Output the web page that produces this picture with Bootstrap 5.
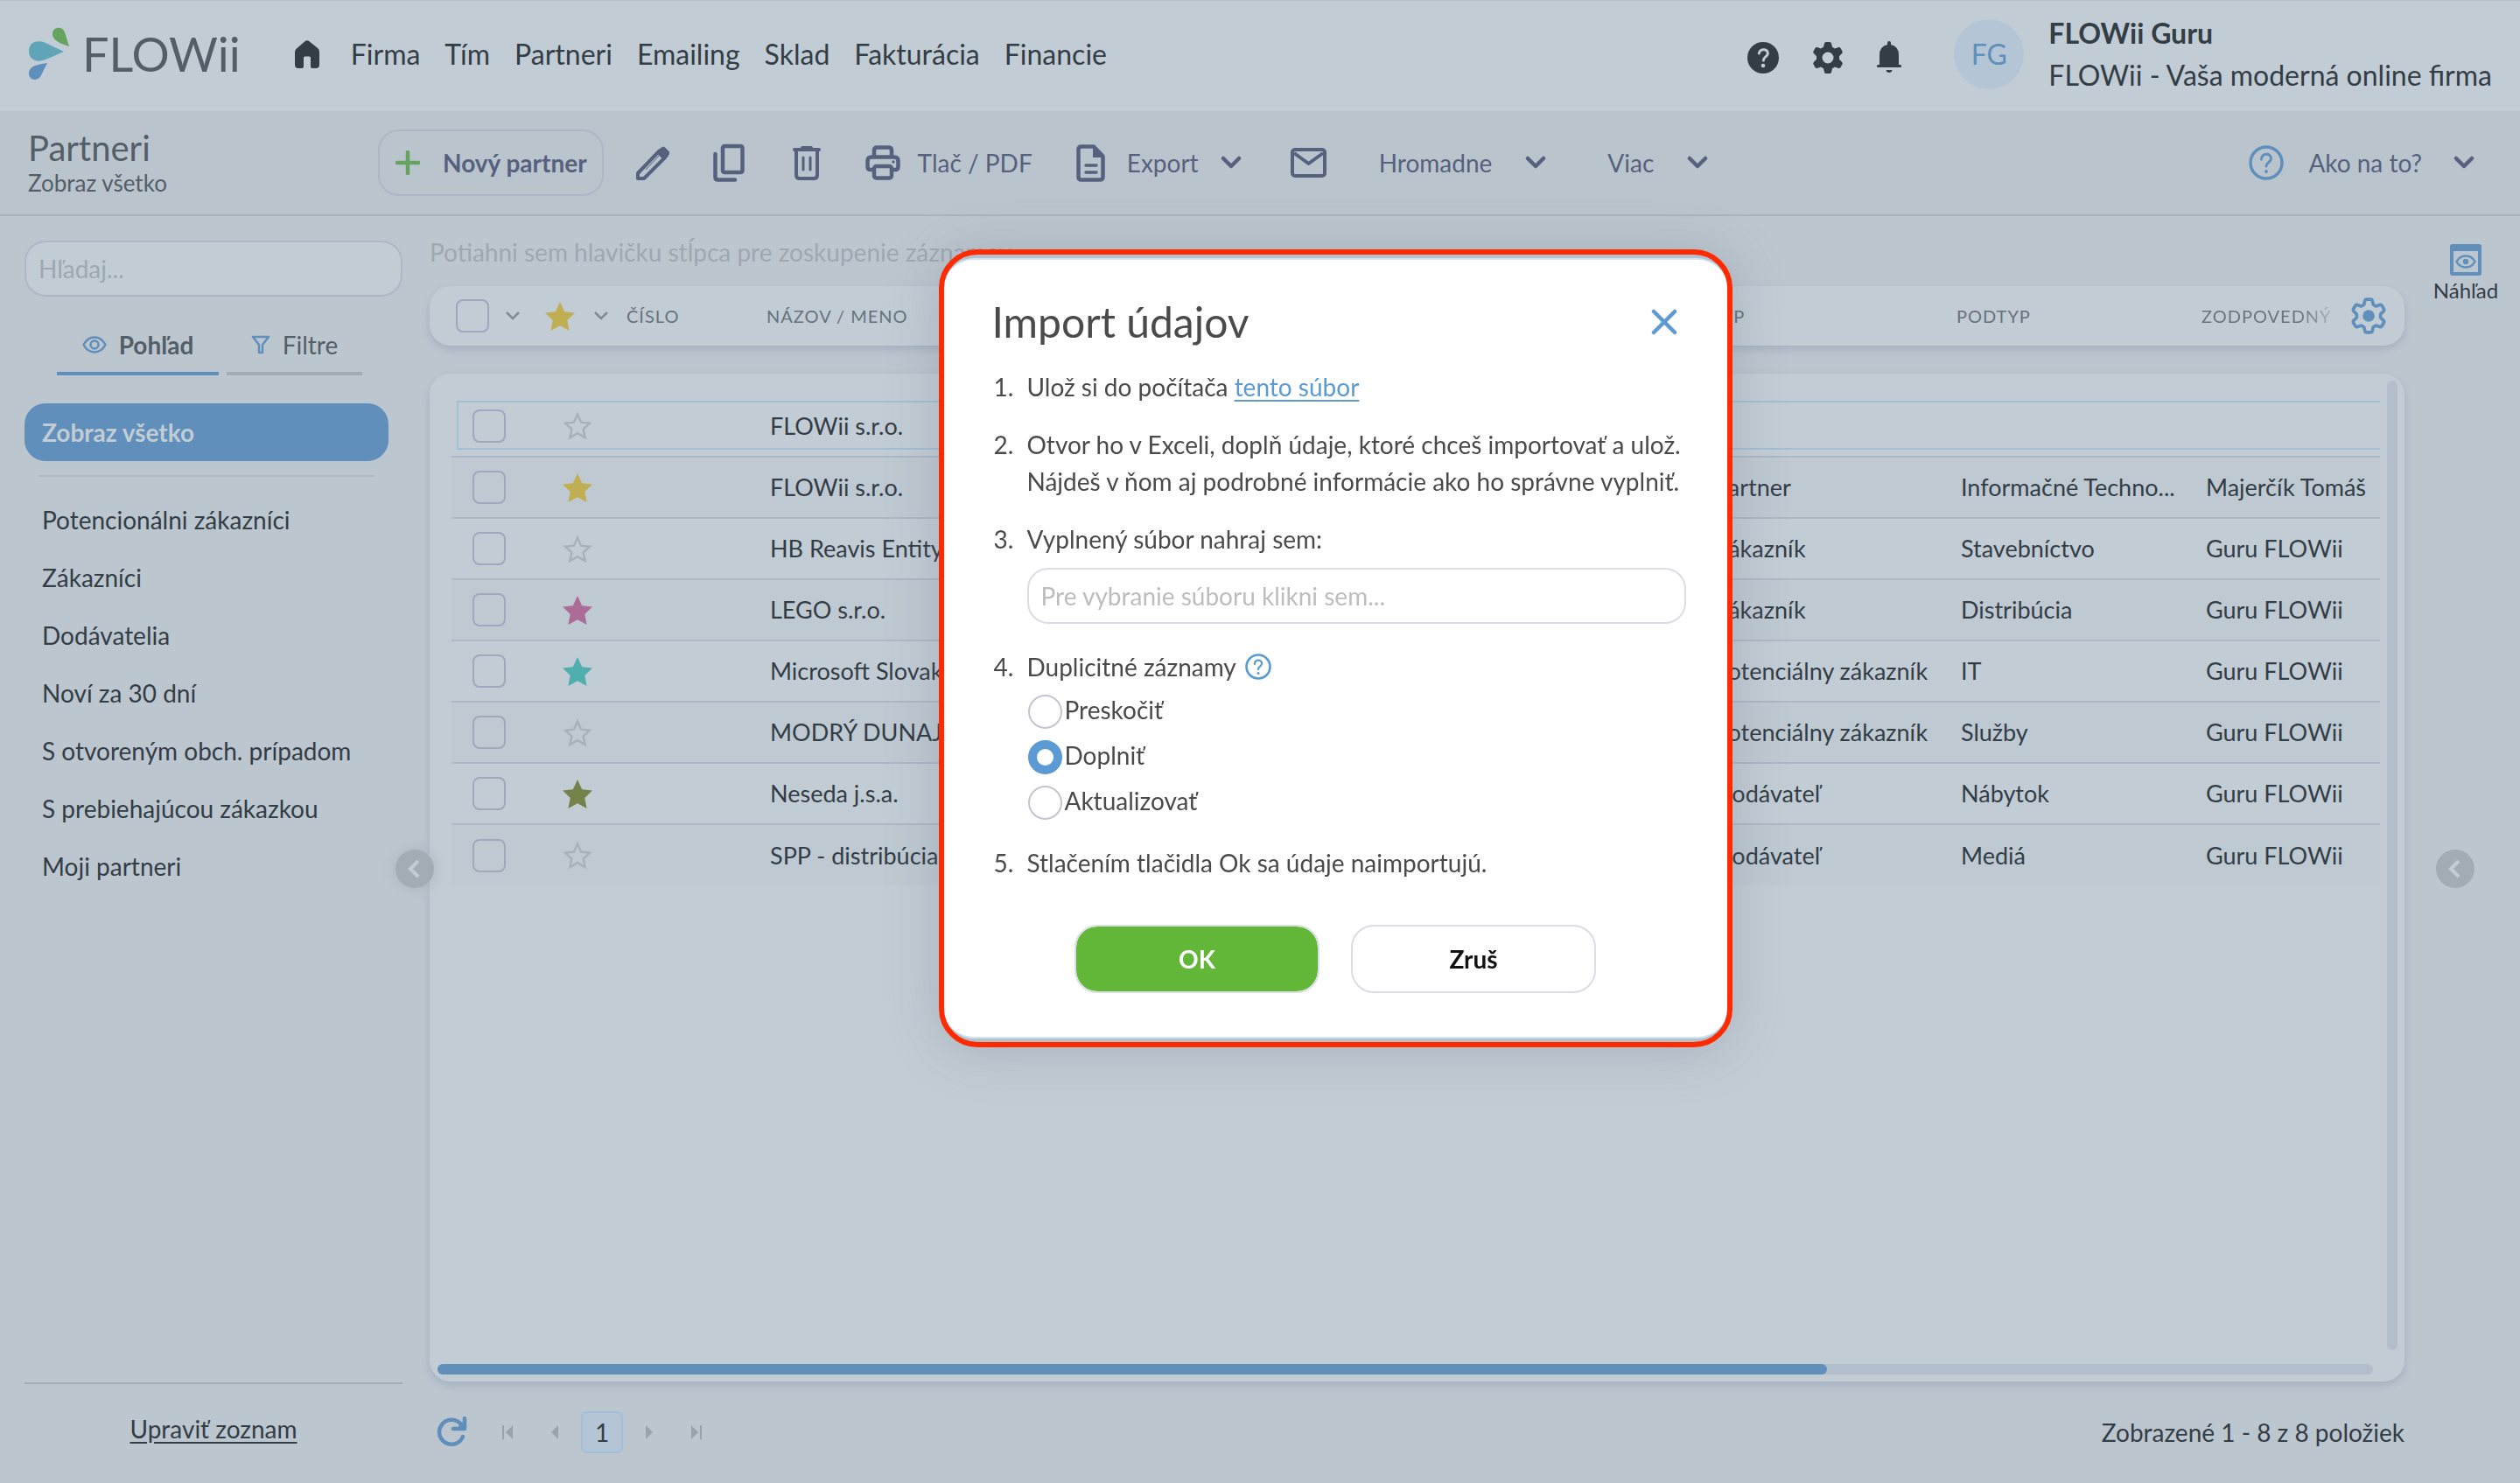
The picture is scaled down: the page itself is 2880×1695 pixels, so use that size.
<!DOCTYPE html>
<html lang="sk">
<head>
<meta charset="utf-8">
<meta name="viewport" content="width=device-width, initial-scale=1">
<title>FLOWii – Partneri</title>
<link href="https://cdn.jsdelivr.net/npm/bootstrap@5.3.0/dist/css/bootstrap.min.css" rel="stylesheet">
<style>
:root{--surface:#c2ccd5;--page:#bcc6cf;--bar:#bac4cd;--ink:#333d46;--soft:#535e68;--tool:#56617e;--blue:#5f8fba;--line:#adb7c7;--muted:#9da8b0}
body{font-family:Lato,"Liberation Sans",sans-serif;font-size:28px;line-height:42px;color:var(--ink);background:var(--page)}
a{color:inherit;text-decoration:none}
svg{display:block;flex:none}
.page-wrap{min-height:100vh}
.topbar{height:127px;padding:0 32px 4px;background:var(--surface);border-top:1px solid #b3bdc6;font-size:32px}
.brand-text{font-size:54px;line-height:60px;color:var(--soft);margin-left:14px}
.avatar-dot{width:80px;height:80px;background:#b4c6d6;color:var(--blue)}
.user-lines{line-height:48px}
.toolbar{height:120px;padding:0 52px 0 32px;background:var(--bar);border-bottom:2px solid #a8b3bc;color:var(--tool)}
.page-title{width:400px;color:var(--soft)}
.page-title h1{font-size:40px;line-height:46px;margin:0;font-weight:400}
.page-title p{font-size:26px;line-height:34px;margin:0}
.tool-btn{background:none;border:0;padding:0;color:inherit;display:flex;align-items:center}
.new-btn{height:76px;border:2px solid var(--line);border-radius:24px;padding:0 17px 0 18px;gap:26px;font-weight:700}
.sidebar{width:460px;padding:28px 0 0 28px}
.search-box{height:64px;border:2px solid var(--line);border-radius:24px;background:var(--surface);padding:0 14px;color:var(--ink)}
.search-box::placeholder{color:var(--muted);opacity:1}
.tab-row{margin:28px 0 0 37px;gap:9px;color:var(--soft)}
.tab-link{height:62px;padding-bottom:4px;border-bottom:4px solid #a2acb4;gap:14px}
.tab-link.on{border-color:var(--blue);font-weight:700;width:185px}
.tab-link.off{width:155px}
.view-list{margin:32px 16px 0 0}
.view-list a{display:block;height:66px;line-height:66px;padding-left:20px}
.view-list a.on{background:var(--blue);color:var(--surface);font-weight:700;border-radius:24px}
.view-rule{height:2px;background:var(--line);margin:16px}
.side-foot{height:115px;border-top:2px solid #a2acb4;padding-top:30px}
.side-foot a{text-decoration:underline;text-underline-offset:4px}
.main-col{margin-left:31px;padding-top:20px}
.group-hint{color:var(--muted);height:60px}
.sheet{background:var(--surface);border-radius:24px;box-shadow:0 4px 10px #a3afc0}
.head-sheet{height:68px;padding-left:20px}
table{table-layout:fixed;width:100%;border-collapse:collapse}
th{font-weight:400;font-size:20px;letter-spacing:1px;color:#67727c;height:68px;padding:0;white-space:nowrap;overflow:hidden}
.fade-text{color:transparent;background:linear-gradient(90deg,#67727c 75%,#a9b3bc 100%);background-clip:text;-webkit-background-clip:text}
.body-sheet{margin-top:32px;padding:25px 28px 8px 25px;position:relative}
td{height:70px;padding:0;border-bottom:2px solid var(--line);font-size:27px;white-space:nowrap;overflow:hidden;text-overflow:ellipsis}
tr:nth-child(even) td{background:#bec9d2}
tr:last-child td{border-bottom:0}
tr.current{position:relative}
tr.current td:first-child{overflow:visible}
tr.current td:first-child::after{content:"";position:absolute;inset:6px 0 8px 6px;border:2px solid #a3bed6;border-right:0;pointer-events:none}
.tick{appearance:none;display:block;width:38px;height:38px;margin:0;border:2px solid #a0a8bf;border-radius:8px;background:transparent}
td .tick{margin-left:24px}
.rail-v{position:absolute;right:8px;top:8px;bottom:36px;width:12px;border-radius:6px;background:#b3becc}
.rail-h{height:12px;border-radius:6px;background:#b3becc;margin:0 8px 0 -16px}
.rail-h div{height:12px;border-radius:6px;background:var(--blue)}
.pager{height:116px}
.pager-page{width:48px;height:48px;border:2px solid #a3bfda;border-radius:7px;background:#b4c6d6;padding:0;line-height:44px;color:var(--ink)}
.right-rail{width:132px;padding:32px 0 0 8px;font-size:24px;line-height:34px}
.round-btn{position:absolute;top:971px;width:44px;height:44px;border-radius:50%;border:0;padding:0;background:#a2acb4}
.round-left{left:452px;box-shadow:0 0 16px #a9b4be}
.round-right{right:52px}
.import-layer{padding:285px 0 0 172px;color:#4a4a4a}
.import-layer .modal-dialog{max-width:907px;margin:0 auto}
.import-ring{border:6px solid #ff2a00;border-radius:44px;padding:4px 0;background:#b4c0ca;box-shadow:0 4px 60px rgba(90,105,120,.25);overflow:hidden}
.import-card{background:#fff;border-top:2px solid #cfe4f7;border-bottom:2px solid #cfe4f7;border-radius:34px;padding:36px 47px 50px 55px}
.import-card h2{font-size:48px;line-height:70px;font-weight:400;margin:0}
.steps{margin:18px 0 0;padding-left:32px}
.steps>li{margin-bottom:24px;padding-left:8px}
.steps a{color:#5b9ad2;text-decoration:underline;text-underline-offset:4px}
.file-box{display:block;width:100%;height:64px;border:2px solid #dcdce6;border-radius:24px;padding:0 14px;margin:12px 0 28px;background:#fff}
.file-box::placeholder{color:#bdbdbd;opacity:1}
.opts{padding-top:2px}
.opt{height:52px;gap:3px}
.opt input{appearance:none;width:39px;height:39px;margin:5px 0 0 1px;border:2px solid #c5c4d4;border-radius:50%;background:#fff}
.opt input:checked{border:10px solid #5b9ad2}
.act-row{gap:36px;margin-top:50px;padding-right:8px}
.act{width:280px;height:78px;border:2px solid #dcdce6;border-radius:26px;background:#fff;color:#111;font-weight:700}
.act-ok{background:#63b738;color:#fff;background-clip:padding-box}
</style>
</head>
<body>
<svg class="d-none" aria-hidden="true">
<symbol id="star" viewBox="0 0 34 33"><path d="M17 0l5.200 11.200 11.800 1.400-8.700 8.300 2.300 12.100L17 27.200 6.400 33l2.300-12.100L0 12.600l11.800-1.400z"/></symbol>
<symbol id="star-o" viewBox="0 0 34 33"><path d="M17 3.500l4.100 9.200 9.700 1.100-7.200 6.700 2 9.600L17 25.200l-8.600 4.900 2-9.600-7.200-6.700 9.700-1.100z" fill="none" stroke="#a6b1ba" stroke-width="2.500"/></symbol>
<symbol id="chev" viewBox="0 0 24 16"><path d="M3 3l9 9 9-9" fill="none" stroke="currentColor" stroke-width="4.500" stroke-linecap="round" stroke-linejoin="round"/></symbol>
<symbol id="chev-s" viewBox="0 0 16 10"><path d="M1 1l7 7 7-7" fill="none" stroke="#808b95" stroke-width="2.500"/></symbol>
<symbol id="help" viewBox="0 0 40 40"><circle cx="20" cy="20" r="18" fill="none" stroke="currentColor" stroke-width="3.500"/><path d="M14.500 16c0-7.500 11-7.500 11-1 0 4.500-5.500 4.500-5.500 9" fill="none" stroke="currentColor" stroke-width="3" stroke-linecap="round"/><circle cx="20" cy="30" r="2"/></symbol>
<symbol id="gear" viewBox="0 0 36 36"><path fill-rule="evenodd" d="M14 1.500Q14.300 0 16 0h4q1.700 0 2 1.500l1 4.200 3 1.800 4.200-1.500q1.500-.4 2.300 1l2 3.400q.8 1.600-.4 2.700L31 16.200v3.600l3.100 3.100q1.200 1.100.4 2.700l-2 3.400q-.8 1.400-2.300 1L26 28.500l-3 1.800-1 4.200q-.3 1.500-2 1.500h-4q-1.700 0-2-1.500l-1-4.200-3-1.800L5.800 30q-1.500.4-2.300-1l-2-3.400q-.8-1.600.4-2.700L5 19.800v-3.600l-3.100-3.100q-1.200-1.100-.4-2.700l2-3.400q.8-1.400 2.300-1L10 7.500l3-1.800zM18 11.500a6.500 6.500 0 1 0 0 13 6.500 6.500 0 0 0 0-13z"/></symbol>
</svg>

<div class="page-wrap d-flex flex-column position-relative">
<header class="topbar d-flex align-items-center">
  <a href="#" class="d-flex align-items-center" aria-label="FLOWii">
    <svg width="48" height="62" viewBox="0 0 48 62"><path d="M47 22C37 19 27 15 28 7 29-1 40-1 42 6z" fill="#65a35f"/><path d="M41 28L19 37.500C8 41 1 36 1 27.500S8 14 19 17.500z" fill="#60a4b8"/><path d="M22 41l-7.500 15C9 64 0 59 1 51.500 2 45 9 43 22 41z" fill="#5f8fba"/></svg>
    <span class="brand-text">FLOWii</span>
  </a>
  <nav class="d-flex align-items-center" style="gap:28px;margin-left:62px" aria-label="Hlavné menu">
    <a href="#" aria-label="Domov" class="me-2"><svg width="28" height="32" viewBox="0 0 28 32" fill="#333d46"><path d="M0 13.500Q0 11 2 9.500L11.500 1.300Q14-.8 16.500 1.300L26 9q2 1.500 2 4V28q0 4-4 4h-4q-2 0-2-2V20q0-1.500-1.500-1.500h-5Q10 18.500 10 20v10q0 2-2 2H4q-4 0-4-4z"/></svg></a>
    <a href="#">Firma</a><a href="#">Tím</a><a href="#">Partneri</a><a href="#">Emailing</a><a href="#">Sklad</a><a href="#">Fakturácia</a><a href="#">Financie</a>
  </nav>
  <div class="d-flex align-items-center ms-auto pt-2" style="gap:38px">
    <a href="#" aria-label="Pomoc"><svg width="36" height="36" viewBox="0 0 36 36"><circle cx="18" cy="18" r="18" fill="#333d46"/><path d="M13.300 13c1-6.500 11-5.200 10 .5-.6 3.400-5 3.500-5 7.500" fill="none" stroke="#c2ccd5" stroke-width="3" stroke-linecap="round"/><circle cx="18" cy="27" r="2.300" fill="#c2ccd5"/></svg></a>
    <a href="#" aria-label="Nastavenia"><svg width="36" height="36" fill="#333d46"><use href="#gear"/></svg></a>
    <a href="#" aria-label="Upozornenia"><svg width="28" height="38" viewBox="0 0 28 38" fill="#333d46"><path d="M12 4V2q0-2 2-2t2 2v2q9 2 9 12v11h2q1 0 1 1.500t-1 1.500H1q-1 0-1-1.500T1 27h2V16Q3 6 12 4zM10.500 33h7q-.5 3-3.500 3t-3.500-3z"/></svg></a>
  </div>
  <div class="avatar-dot rounded-circle d-flex align-items-center justify-content-center" style="margin:0 28px 0 60px">FG</div>
  <div class="user-lines"><div class="fw-bold">FLOWii Guru</div><div>FLOWii - Vaša moderná online firma</div></div>
</header>

<div class="toolbar d-flex align-items-center">
  <div class="page-title"><h1>Partneri</h1><p>Zobraz všetko</p></div>
  <button class="tool-btn new-btn"><svg width="28" height="28" viewBox="0 0 28 28"><path d="M14 2v24M2 14h24" stroke="#65a35f" stroke-width="4.500" stroke-linecap="round"/></svg>Nový partner</button>
  <button class="tool-btn" style="margin-left:37px" aria-label="Upraviť"><svg width="38" height="40" viewBox="0 0 38 40"><path d="M2 38v-6L26 7q4-4 7 0 4 3 0 7L9 38z" fill="none" stroke="currentColor" stroke-width="4" stroke-linejoin="round"/><path d="M24 9l5-6q2-2 4 0l4 4q2 2 0 4l-6 5zM26 12L11 28" fill="currentColor" stroke="currentColor" stroke-width="1"/></svg></button>
  <button class="tool-btn" style="margin-left:50px" aria-label="Kopírovať"><svg width="36" height="44" viewBox="0 0 36 44" fill="none" stroke="currentColor" stroke-width="4.500" stroke-linecap="round" stroke-linejoin="round"><rect x="11" y="3" width="22.500" height="30" rx="2"/><path d="M2.500 12v26.500q0 3 3 3H25"/></svg></button>
  <button class="tool-btn" style="margin-left:54px" aria-label="Zmazať"><svg width="34" height="40" viewBox="0 0 34 40" fill="none" stroke="currentColor" stroke-width="4" stroke-linecap="round"><path d="M3 5h28M12 3h10M5 6v28q0 4 4 4h16q4 0 4-4V6"/><path d="M13 14v14M21 14v14" stroke-width="3"/></svg></button>
  <button class="tool-btn" style="margin-left:50px;gap:20px"><svg width="40" height="40" viewBox="0 0 40 40" fill="none" stroke="currentColor" stroke-width="4.500" stroke-linejoin="round"><path d="M10 13V6q0-3.500 3.500-3.500h13Q30 2.500 30 6v7M10 28H6q-3.500 0-3.500-3.500V18q0-4.500 4.500-4.500h26q4.500 0 4.500 4.500v6.500Q37.500 28 34 28h-4"/><rect x="10" y="24" width="20" height="13.500" rx="2.500"/><circle cx="32" cy="19" r="1.700" fill="currentColor" stroke="none"/></svg>Tlač / PDF</button>
  <button class="tool-btn" style="margin-left:50px;gap:25px"><svg width="33" height="43" viewBox="0 0 33 43"><path d="M20 2.500H6Q2.500 2.500 2.500 6v31Q2.500 40.500 6 40.500h21q3.500 0 3.500-3.500V13.500z" fill="none" stroke="currentColor" stroke-width="4.500" stroke-linejoin="round"/><path d="M19 2v13h13" fill="currentColor"/><path d="M11 24h12M11 32h12" stroke="currentColor" stroke-width="3.500" stroke-linecap="round"/></svg>Export<svg width="24" height="16"><use href="#chev"/></svg></button>
  <button class="tool-btn" style="margin-left:56px" aria-label="E-mail"><svg width="41" height="34" viewBox="0 0 41 34" fill="none" stroke="currentColor" stroke-width="4" stroke-linejoin="round"><rect x="2" y="2" width="37" height="30" rx="3"/><path d="M4 6l16.500 12L37 6"/></svg></button>
  <button class="tool-btn" style="margin-left:60px;gap:38px">Hromadne<svg width="24" height="16"><use href="#chev"/></svg></button>
  <button class="tool-btn" style="margin-left:70px;gap:38px">Viac<svg width="24" height="16"><use href="#chev"/></svg></button>
  <button class="tool-btn ms-auto" style="gap:28px"><svg width="40" height="40" color="#5f8fba" fill="#5f8fba"><use href="#help"/></svg>Ako na to?<svg width="24" height="16" class="ms-2"><use href="#chev"/></svg></button>
</div>

<div class="d-flex flex-grow-1">
  <aside class="sidebar d-flex flex-column flex-shrink-0">
    <input class="search-box w-100" type="search" placeholder="Hľadaj..." aria-label="Hľadaj">
    <div class="tab-row d-flex">
      <a href="#" class="tab-link on d-flex align-items-center justify-content-center"><svg width="28" height="20" viewBox="0 0 28 20" fill="none" stroke="#5f8fba" stroke-width="2.500"><path d="M1.500 10Q6 1.500 14 1.500T26.500 10Q22 18.500 14 18.500T1.500 10z"/><circle cx="14" cy="10" r="4.500"/></svg>Pohľad</a>
      <a href="#" class="tab-link off d-flex align-items-center justify-content-center"><svg width="22" height="22" viewBox="0 0 22 22" fill="none" stroke="#5f8fba" stroke-width="2.500" stroke-linejoin="round"><path d="M2 2h18l-7 9v9h-4v-9z"/></svg>Filtre</a>
    </div>
    <nav class="view-list" aria-label="Pohľady">
      <a href="#" class="on">Zobraz všetko</a>
      <div class="view-rule"></div>
      <a href="#">Potencionálni zákazníci</a><a href="#">Zákazníci</a><a href="#">Dodávatelia</a><a href="#">Noví za 30 dní</a><a href="#">S otvoreným obch. prípadom</a><a href="#">S prebiehajúcou zákazkou</a><a href="#">Moji partneri</a>
    </nav>
    <div class="side-foot text-center mt-auto"><a href="#">Upraviť zoznam</a></div>
  </aside>

  <main class="main-col d-flex flex-column flex-grow-1">
    <div class="group-hint">Potiahni sem hlavičku stĺpca pre zoskupenie záznamov</div>
    <div class="sheet head-sheet">
      <table>
        <colgroup><col style="width:112px"><col style="width:93px"><col style="width:160px"><col><col style="width:281px"><col style="width:280px"><col style="width:171px"><col style="width:61px"></colgroup>
        <thead><tr>
          <th><div class="d-flex align-items-center" style="gap:19px;padding-left:10px"><input type="checkbox" class="tick" aria-label="Vybrať všetko"><svg width="16" height="10"><use href="#chev-s"/></svg></div></th>
          <th><div class="d-flex align-items-center" style="gap:22px"><svg width="34" height="33" fill="#c0ae52"><use href="#star"/></svg><svg width="16" height="10"><use href="#chev-s"/></svg></div></th>
          <th>ČÍSLO</th><th>NÁZOV / MENO</th><th>TYP</th><th>PODTYP</th><th><span class="fade-text">ZODPOVEDNÝ</span></th>
          <th><button class="tool-btn" aria-label="Stĺpce"><svg width="40" height="42" viewBox="-1 -2 38 40"><path d="M14 1.500Q14.300 0 16 0h4q1.700 0 2 1.500l1 4.200 3 1.800 4.200-1.500q1.500-.4 2.300 1l2 3.400q.8 1.600-.4 2.700L31 16.200v3.600l3.100 3.100q1.200 1.100.4 2.700l-2 3.400q-.8 1.400-2.300 1L26 28.500l-3 1.800-1 4.200q-.3 1.500-2 1.500h-4q-1.700 0-2-1.500l-1-4.200-3-1.800L5.800 30q-1.500.4-2.300-1l-2-3.400q-.8-1.600.4-2.700L5 19.800v-3.600l-3.100-3.100q-1.200-1.100-.4-2.700l2-3.400q.8-1.400 2.300-1L10 7.500l3-1.800z" fill="none" stroke="#5f8fba" stroke-width="3.500" stroke-linejoin="round"/><circle cx="18" cy="18" r="6.500" fill="#5f8fba"/></svg></button></th>
        </tr></thead>
      </table>
    </div>
    <div class="sheet body-sheet d-flex flex-column flex-grow-1">
      <table>
        <colgroup><col style="width:127px"><col style="width:73px"><col style="width:164px"><col><col style="width:282px"><col style="width:280px"><col style="width:199px"></colgroup>
        <tbody>
          <tr class="current"><td><input type="checkbox" class="tick" aria-label="Vybrať FLOWii s.r.o."></td><td><svg width="34" height="33"><use href="#star-o"/></svg></td><td></td><td>FLOWii s.r.o.</td><td></td><td></td><td></td></tr>
          <tr><td><input type="checkbox" class="tick" aria-label="Vybrať FLOWii s.r.o."></td><td><svg width="34" height="33" fill="#c0ae52"><use href="#star"/></svg></td><td></td><td>FLOWii s.r.o.</td><td>Partner</td><td>Informačné Techno...</td><td>Majerčík Tomáš</td></tr>
          <tr><td><input type="checkbox" class="tick" aria-label="Vybrať HB Reavis"></td><td><svg width="34" height="33"><use href="#star-o"/></svg></td><td></td><td>HB Reavis Entity</td><td>Zákazník</td><td>Stavebníctvo</td><td>Guru FLOWii</td></tr>
          <tr><td><input type="checkbox" class="tick" aria-label="Vybrať LEGO"></td><td><svg width="34" height="33" fill="#ab6c98"><use href="#star"/></svg></td><td></td><td>LEGO s.r.o.</td><td>Zákazník</td><td>Distribúcia</td><td>Guru FLOWii</td></tr>
          <tr><td><input type="checkbox" class="tick" aria-label="Vybrať Microsoft"></td><td><svg width="34" height="33" fill="#4fafaf"><use href="#star"/></svg></td><td></td><td>Microsoft Slovakia</td><td>Potenciálny zákazník</td><td>IT</td><td>Guru FLOWii</td></tr>
          <tr><td><input type="checkbox" class="tick" aria-label="Vybrať MODRÝ DUNAJ"></td><td><svg width="34" height="33"><use href="#star-o"/></svg></td><td></td><td>MODRÝ DUNAJ</td><td>Potenciálny zákazník</td><td>Služby</td><td>Guru FLOWii</td></tr>
          <tr><td><input type="checkbox" class="tick" aria-label="Vybrať Neseda"></td><td><svg width="34" height="33" fill="#758249"><use href="#star"/></svg></td><td></td><td>Neseda j.s.a.</td><td>Dodávateľ</td><td>Nábytok</td><td>Guru FLOWii</td></tr>
          <tr><td><input type="checkbox" class="tick" aria-label="Vybrať SPP"></td><td><svg width="34" height="33"><use href="#star-o"/></svg></td><td></td><td>SPP - distribúcia</td><td>Dodávateľ</td><td>Mediá</td><td>Guru FLOWii</td></tr>
        </tbody>
      </table>
      <div class="rail-v"></div>
      <div class="rail-h mt-auto"><div style="width:71.8%"></div></div>
    </div>
    <div class="pager d-flex align-items-center">
      <button class="tool-btn" style="margin-left:7px" aria-label="Obnoviť"><svg width="36" height="36" viewBox="0 0 36 36"><path d="M31 23A14 14 0 1 1 29 9" fill="none" stroke="#5f8fba" stroke-width="4.500" stroke-linecap="round"/><path d="M33 2v12H20" fill="none" stroke="#5f8fba" stroke-width="4.500" stroke-linecap="round" stroke-linejoin="round"/><path d="M33 4v10H23z" fill="#5f8fba"/></svg></button>
      <button class="tool-btn" style="margin-left:40px" aria-label="Prvá"><svg width="13" height="16" fill="#99a3ad"><path d="M0 0h2v16H0zM12 0v16L4 8z"/></svg></button>
      <button class="tool-btn" style="margin-left:43px" aria-label="Predošlá"><svg width="9" height="16" fill="#99a3ad"><path d="M8 0v16L0 8z"/></svg></button>
      <button class="pager-page" style="margin:0 26px 0 25px">1</button>
      <button class="tool-btn" aria-label="Ďalšia"><svg width="9" height="16" fill="#99a3ad"><path d="M0 0v16l8-8z"/></svg></button>
      <button class="tool-btn" style="margin-left:43px" aria-label="Posledná"><svg width="13" height="16" fill="#99a3ad"><path d="M0 0v16l8-8zM10 0h2v16h-2z"/></svg></button>
      <span class="ms-auto">Zobrazené 1 - 8 z 8 položiek</span>
    </div>
  </main>

  <aside class="right-rail flex-shrink-0">
    <a href="#" class="d-flex flex-column align-items-center"><svg width="36" height="36" viewBox="0 0 36 36"><path fill-rule="evenodd" fill="#5f8fba" d="M3 0h30q3 0 3 3v30q0 3-3 3H3q-3 0-3-3V3q0-3 3-3zm1 8v24h28V8z"/><path d="M7.500 20Q11 13.500 18 13.500T28.500 20Q25 26.500 18 26.500T7.500 20z" fill="none" stroke="#5f8fba" stroke-width="2.500"/><circle cx="18" cy="20" r="3.200" fill="#5f8fba"/></svg>Náhľad</a>
  </aside>
</div>
<button class="round-btn round-left" aria-label="Skryť panel"><svg width="44" height="44" fill="none" stroke="#c2ccd5" stroke-width="4"><path d="M26 13l-9 9 9 9"/></svg></button>
<button class="round-btn round-right" aria-label="Zobraziť náhľad"><svg width="44" height="44" fill="none" stroke="#c2ccd5" stroke-width="4"><path d="M26 13l-9 9 9 9"/></svg></button>
</div>

<div class="modal d-block import-layer" role="dialog" aria-labelledby="importTitle">
  <div class="modal-dialog"><div class="import-ring"><div class="import-card">
    <div class="d-flex align-items-center justify-content-between">
      <h2 id="importTitle">Import údajov</h2>
      <button class="tool-btn me-2" aria-label="Zavrieť"><svg width="32" height="30" viewBox="0 0 32 30"><path d="M3 3l24 24M27 3L3 27" stroke="#5b9ad2" stroke-width="4.500" stroke-linecap="round"/></svg></button>
    </div>
    <ol class="steps">
      <li>Ulož si do počítača <a href="#">tento súbor</a></li>
      <li>Otvor ho v Exceli, doplň údaje, ktoré chceš importovať a ulož.<br>Nájdeš v ňom aj podrobné informácie ako ho správne vyplniť.</li>
      <li><label for="importFile">Vyplnený súbor nahraj sem:</label><input id="importFile" class="file-box" type="text" placeholder="Pre vybranie súboru klikni sem..."></li>
      <li><span class="d-flex align-items-center" style="gap:10px">Duplicitné záznamy <svg width="30" height="30" color="#5b9ad2" fill="#5b9ad2"><use href="#help"/></svg></span>
        <div class="opts">
        <div class="opt d-flex align-items-center"><input type="radio" name="dup" id="d1"><label for="d1">Preskočiť</label></div>
        <div class="opt d-flex align-items-center"><input type="radio" name="dup" id="d2" checked><label for="d2">Doplniť</label></div>
        <div class="opt d-flex align-items-center"><input type="radio" name="dup" id="d3"><label for="d3">Aktualizovať</label></div>
        </div>
      </li>
      <li>Stlačením tlačidla Ok sa údaje naimportujú.</li>
    </ol>
    <div class="act-row d-flex justify-content-center">
      <button class="act act-ok">OK</button><button class="act">Zruš</button>
    </div>
  </div></div></div>
</div>
<script src="https://cdn.jsdelivr.net/npm/bootstrap@5.3.0/dist/js/bootstrap.bundle.min.js"></script>
</body>
</html>
